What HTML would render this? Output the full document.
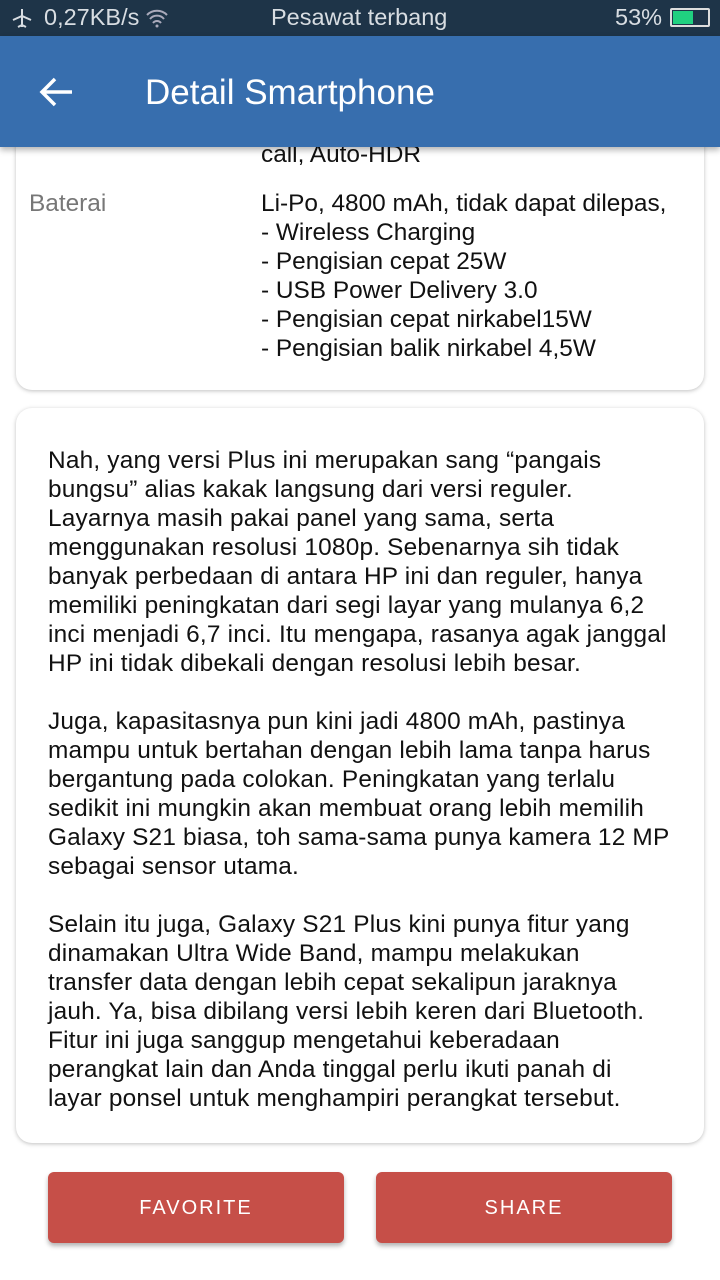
<!DOCTYPE html>
<html><head><meta charset="utf-8"><style>
*{margin:0;padding:0;box-sizing:border-box}
body{width:720px;height:1280px;background:#fff;font-family:"Liberation Sans",Roboto,sans-serif;position:relative;overflow:hidden}
.sb{position:absolute;top:0;left:0;width:720px;height:36px;background:#1e3448;color:#d8dde2;font-size:23.5px}
.sb span{position:absolute;top:4px}
.ab{position:absolute;top:36px;left:0;width:720px;height:111px;background:#376eae;box-shadow:0 3px 6px rgba(0,0,0,.3);z-index:5}
.ab .t{position:absolute;left:145px;top:37px;color:#fff;font-size:35px}
.card{position:absolute;left:16px;width:688px;background:#fff;border-radius:16px;box-shadow:0 1px 4px rgba(0,0,0,.25)}
.row{position:absolute;font-size:24.4px;line-height:29px;color:#111;white-space:nowrap}
.p{position:absolute;left:32px;font-size:24.4px;line-height:29px;color:#111;white-space:nowrap;letter-spacing:0.2px}
.btn{position:absolute;top:1172px;width:296px;height:71px;background:#c64f48;border-radius:6px;color:#fff;font-size:20px;letter-spacing:2px;text-align:center;line-height:73px;box-shadow:0 3px 5px rgba(0,0,0,.3)}
</style></head><body>
<div class="sb">
<svg style="position:absolute;left:10px;top:7px" width="24" height="22" viewBox="0 0 24 22"><path d="M12 2v18M3 13l9-4 9 4M8 20l4-2 4 2" stroke="#d8dde2" stroke-width="2" fill="none"/></svg>
<span style="left:44px">0,27KB/s</span>
<svg style="position:absolute;left:145px;top:8px" width="24" height="20" viewBox="0 0 24 20"><path d="M2 7a14 14 0 0 1 20 0M5 11a9 9 0 0 1 14 0M8 15a5 5 0 0 1 8 0" stroke="#aab" stroke-width="2" fill="none"/><circle cx="12" cy="18" r="1.5" fill="#aab"/></svg>
<span style="left:271px">Pesawat terbang</span>
<span style="left:615px">53%</span>
<div style="position:absolute;left:670px;top:8px;width:40px;height:19px;border:2px solid #ddd;border-radius:2px"><div style="position:absolute;left:1px;top:1px;width:20px;height:13px;background:#20d080"></div></div>
</div>
<div class="ab">
<svg style="position:absolute;left:38px;top:40px" width="36" height="32" viewBox="0 0 36 32"><path d="M34 16H4M17 3L4 16l13 13" stroke="#fff" stroke-width="3.5" fill="none"/></svg>
<div class="t">Detail Smartphone</div>
</div>
<div class="card" style="top:100px;height:290px">
<div class="row" style="left:245px;top:40px">call, Auto-HDR</div>
<div class="row" style="left:13px;top:89px;color:#777">Baterai</div>
<div class="row" style="left:245px;top:89px">Li-Po, 4800 mAh, tidak dapat dilepas,<br>- Wireless Charging<br>- Pengisian cepat 25W<br>- USB Power Delivery 3.0<br>- Pengisian cepat nirkabel15W<br>- Pengisian balik nirkabel 4,5W</div>
</div>
<div class="card" style="top:408px;height:735px">
<div class="p" style="top:38px">Nah, yang versi Plus ini merupakan sang “pangais<br>bungsu” alias kakak langsung dari versi reguler.<br>Layarnya masih pakai panel yang sama, serta<br>menggunakan resolusi 1080p. Sebenarnya sih tidak<br>banyak perbedaan di antara HP ini dan reguler, hanya<br>memiliki peningkatan dari segi layar yang mulanya 6,2<br>inci menjadi 6,7 inci. Itu mengapa, rasanya agak janggal<br>HP ini tidak dibekali dengan resolusi lebih besar.<br><br>Juga, kapasitasnya pun kini jadi 4800 mAh, pastinya<br>mampu untuk bertahan dengan lebih lama tanpa harus<br>bergantung pada colokan. Peningkatan yang terlalu<br>sedikit ini mungkin akan membuat orang lebih memilih<br>Galaxy S21 biasa, toh sama-sama punya kamera 12 MP<br>sebagai sensor utama.<br><br>Selain itu juga, Galaxy S21 Plus kini punya fitur yang<br>dinamakan Ultra Wide Band, mampu melakukan<br>transfer data dengan lebih cepat sekalipun jaraknya<br>jauh. Ya, bisa dibilang versi lebih keren dari Bluetooth.<br>Fitur ini juga sanggup mengetahui keberadaan<br>perangkat lain dan Anda tinggal perlu ikuti panah di<br>layar ponsel untuk menghampiri perangkat tersebut.</div>
</div>
<div class="btn" style="left:48px">FAVORITE</div>
<div class="btn" style="left:376px">SHARE</div>
</body></html>
